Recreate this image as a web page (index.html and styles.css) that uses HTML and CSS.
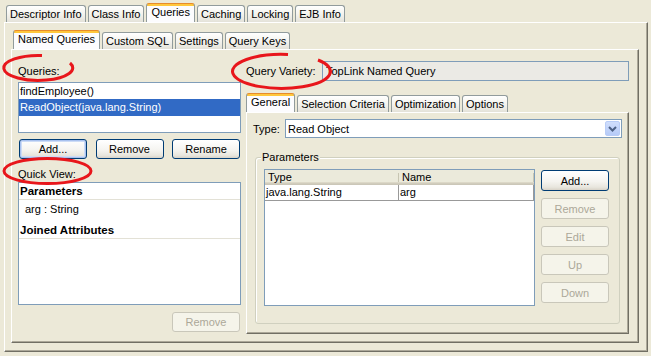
FILE: index.html
```html
<!DOCTYPE html>
<html lang="en">
  <head>
    <meta charset="UTF-8" />
    <title>Queries</title>
    <link rel="stylesheet" href="styles.css">
  </head>
  <body>
    <div class="window">
      <div class="tabs top-tabs">
        <div class="tab">Descriptor Info</div>
        <div class="tab">Class Info</div>
        <div class="tab active">Queries</div>
        <div class="tab">Caching</div>
        <div class="tab">Locking</div>
        <div class="tab">EJB Info</div>
      </div>

      <div class="panel outer-panel">
        <div class="tabs">
          <div class="tab active">Named Queries</div>
          <div class="tab">Custom SQL</div>
          <div class="tab">Settings</div>
          <div class="tab">Query Keys</div>
        </div>

        <div class="panel named-panel">
          <div class="left-col">
            <div class="field-label">Queries:</div>
            <div class="list query-list">
              <div class="list-item">findEmployee()</div>
              <div class="list-item selected">ReadObject(java.lang.String)</div>
            </div>
            <div class="button-row">
              <button class="btn default">Add...</button>
              <button class="btn">Remove</button>
              <button class="btn">Rename</button>
            </div>

            <div class="field-label quick-label">Quick View:</div>
            <div class="list quick-view">
              <div class="qv-head">Parameters</div>
              <div class="qv-item">arg : String</div>
              <div class="qv-head">Joined Attributes</div>
            </div>
            <div class="button-row remove-row">
              <button class="btn" disabled>Remove</button>
            </div>
          </div>

          <div class="right-col">
            <div class="variety-row">
              <span class="variety-label">Query Variety:</span>
              <div class="text-field readonly">TopLink Named Query</div>
            </div>

            <div class="tabs query-tabs">
              <div class="tab active">General</div>
              <div class="tab">Selection Criteria</div>
              <div class="tab">Optimization</div>
              <div class="tab">Options</div>
            </div>

            <div class="panel general-panel">
              <div class="type-row">
                <span class="type-label">Type:</span>
                <div class="combo">
                  <span class="combo-value">Read Object</span>
                  <span class="combo-arrow">
                    <svg width="9" height="6" viewBox="0 0 9 6">
                      <path d="M1 1 L4.5 4.5 L8 1" fill="none" stroke="#4D6185" stroke-width="2"></path>
                    </svg>
                  </span>
                </div>
              </div>

              <div class="group">
                <div class="group-title">Parameters</div>
                <div class="table">
                  <div class="table-head">
                    <div class="th">Type</div>
                    <div class="th">Name</div>
                  </div>
                  <div class="table-row">
                    <div class="td">java.lang.String</div>
                    <div class="td">arg</div>
                  </div>
                </div>
                <div class="side-buttons">
                  <button class="btn">Add...</button>
                  <button class="btn" disabled>Remove</button>
                  <button class="btn" disabled>Edit</button>
                  <button class="btn" disabled>Up</button>
                  <button class="btn" disabled>Down</button>
                </div>
              </div>
            </div>
          </div>
        </div>
      </div>

      <!-- red annotation marks drawn over the labels -->
      <svg class="marks" width="651" height="356" viewBox="0 0 651 356">
        <path d="M42 55.5 A34.5 12.5 0 1 0 70 63"></path>
        <ellipse cx="47.5" cy="171" rx="43.5" ry="12.5"></ellipse>
        <path d="M288 54.5 A49 17 0 1 0 318 60"></path>
      </svg>
    </div>
  </body>
</html>
```

FILE: styles.css
```css
:root {
  --bg-color: #ece9d8;
  --tab-border: #919b9c;
  --field-border: #7f9db9;
  --shadow-dark: #716f64;
  --shadow-light: #aca899;
  --select-color: #316ac5;
  --disabled-text: #aca899;
  --mark-color: #e8161b;
}

* {
  margin: 0;
  padding: 0;
  box-sizing: border-box;
}

body {
  font-family: "Liberation Sans", Arial, sans-serif;
  font-size: 11px;
  color: #000;
  background-color: var(--bg-color);
  width: 651px;
  height: 356px;
  overflow: hidden;
}

.window {
  position: relative;
  height: 356px;
  padding: 3px 0 0 4px;
}

/* Tabs */
.tabs {
  display: flex;
  align-items: flex-end;
  height: 19px;
  padding-left: 2px;
}

.tab {
  height: 17px;
  padding: 0 3px;
  margin-right: 2px;
  border: 1px solid var(--tab-border);
  border-bottom: none;
  border-radius: 3px 3px 0 0;
  background: linear-gradient(#ffffff, #f4f3ee 50%, #e4e2d9);
  line-height: 16px;
  white-space: nowrap;
}

.tab.active {
  height: 19px;
  padding: 0 4px 2px;
  border-top-color: #e68b2c;
  background: linear-gradient(#ffc73c 0, #ffc73c 2px, #fcfcfe 2px);
  line-height: 16px;
}

.query-tabs {
  margin-top: 12px;
  padding-left: 0;
}

/* Panels */
.panel {
  border: 1px solid;
  border-color: #ffffff var(--shadow-dark) var(--shadow-dark) #ffffff;
  box-shadow: inset -1px -1px var(--shadow-light);
}

.outer-panel {
  width: 644px;
  height: 330px;
  padding: 7px 8px 8px 6px;
}

.named-panel {
  height: 294px;
  display: grid;
  grid-template-columns: 223px 1fr;
  column-gap: 5px;
  padding: 11px 9px 8px 6px;
}

.left-col,
.right-col {
  display: flex;
  flex-direction: column;
}

.field-label {
  height: 21px;
  line-height: 21px;
}

.quick-label {
  height: 23px;
  padding-top: 8px;
  line-height: 15px;
}

/* Lists */
.list {
  background-color: #fff;
  border: 1px solid var(--field-border);
}

.query-list {
  height: 51px;
}

.list-item {
  height: 16px;
  line-height: 16px;
  padding-left: 1px;
}

.list-item.selected {
  height: 17px;
  line-height: 17px;
  background-color: var(--select-color);
  color: #fff;
}

.quick-view {
  height: 123px;
}

.qv-head {
  height: 17px;
  line-height: 16px;
  padding-left: 1px;
  font-size: 11.5px;
  font-weight: bold;
  border-bottom: 1px solid #e3e1d6;
}

.qv-item {
  height: 22px;
  line-height: 19px;
  padding-left: 6px;
}

/* Buttons */
.button-row {
  display: flex;
  justify-content: space-between;
  padding: 0 1px;
  margin-top: 6px;
}

.remove-row {
  justify-content: flex-end;
  margin-top: 7px;
}

.btn {
  width: 68px;
  height: 20px;
  font: inherit;
  color: #000;
  border: 1px solid #003c74;
  border-radius: 3px;
  background: linear-gradient(#ffffff, #f5f4f0 55%, #e8e6de 85%, #d8d3c8);
}

.btn.default {
  box-shadow: inset 0 0 0 1px #a9c2ef, inset 0 0 0 2px #cddcf6;
}

.btn:disabled {
  color: var(--disabled-text);
  border-color: #c9c7ba;
  background: #f5f4ea;
}

/* Right column */
.variety-row {
  display: flex;
  align-items: center;
  height: 20px;
}

.variety-label {
  width: 76px;
}

.text-field {
  flex: 1;
  height: 20px;
  padding-left: 3px;
  line-height: 18px;
  border: 1px solid var(--field-border);
  background-color: #fff;
}

.text-field.readonly {
  background-color: #ebeae5;
}

.general-panel {
  height: 222px;
  padding: 6px 6px 9px;
  display: flex;
  flex-direction: column;
}

.type-row {
  display: flex;
  align-items: center;
  height: 19px;
}

.type-label {
  width: 32px;
}

.combo {
  flex: 1;
  display: flex;
  align-items: center;
  height: 19px;
  padding: 1px;
  border: 1px solid var(--field-border);
  background-color: #fff;
}

.combo-value {
  flex: 1;
  padding-left: 1px;
}

.combo-arrow {
  width: 15px;
  height: 15px;
  display: flex;
  align-items: center;
  justify-content: center;
  border: 1px solid #b9cdf7;
  border-radius: 2px;
  background: linear-gradient(#d0defc, #b6cbf8);
}

/* Group box */
.group {
  position: relative;
  display: flex;
  gap: 6px;
  height: 167px;
  margin: 19px 2px 0;
  padding: 11px 10px 0 8px;
  border: 1px solid #d0d0bf;
  border-radius: 3px;
  box-shadow: inset 1px 1px #fff;
}

.group-title {
  position: absolute;
  top: -7px;
  left: 5px;
  padding: 0 1px;
  line-height: 13px;
  background-color: var(--bg-color);
}

.table {
  width: 271px;
  height: 137px;
  background-color: #fff;
  border: 1px solid var(--field-border);
}

.table-head {
  display: grid;
  grid-template-columns: 134px 1fr;
  height: 15px;
  background: linear-gradient(#ebeadb 0, #ebeadb 12px, #e2decd 12px, #d6d2c2 13px, #cbc7b8 14px);
}

.th {
  height: 9px;
  margin-top: 3px;
  padding-left: 3px;
  line-height: 9px;
  border-right: 1px solid #c7c5b2;
}

.table-row {
  display: grid;
  grid-template-columns: 134px 1fr;
  height: 16px;
  border-bottom: 1px solid #999;
}

.td {
  padding-left: 1px;
  line-height: 15px;
  border-right: 1px solid #999;
}

.side-buttons {
  display: flex;
  flex-direction: column;
  gap: 7px;
  padding-top: 1px;
}

.side-buttons .btn {
  height: 21px;
}

/* Annotation marks */
.marks {
  position: absolute;
  top: 0;
  left: 0;
  pointer-events: none;
  fill: none;
  stroke: var(--mark-color);
  stroke-width: 3;
}
```
